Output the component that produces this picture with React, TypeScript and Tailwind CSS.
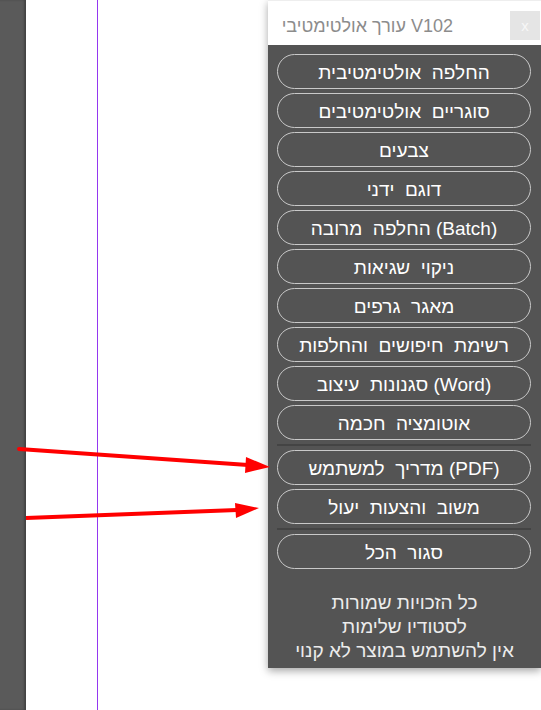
const TOP_ITEMS = [
  "החלפה  אולטימטיבית",
  "סוגריים  אולטימטיבים",
  "צבעים",
  "דוגם  ידני",
  "(Batch) החלפה  מרובה",
  "ניקוי  שגיאות",
  "מאגר  גרפים",
  "רשימת  חיפושים  והחלפות",
  "(Word) סגנונות  עיצוב",
  "אוטומציה  חכמה",
];

const HELP_ITEMS = ["(PDF) מדריך  למשתמש", "משוב  והצעות  יעול"];

function MenuButton({ label }: { label: string }) {
  return (
    <button
      dir="rtl"
      className="h-[35px] w-full shrink-0 rounded-full border-[1.5px] border-[#c9c9c9] bg-transparent pt-[2px] text-[19px] leading-none text-white whitespace-pre"
    >
      {label}
    </button>
  );
}

function Divider() {
  return <div className="h-[2px] w-full shrink-0 bg-[#444444]" />;
}

export default function App() {
  return (
    <div
      className="relative flex h-[710px] w-[541px] overflow-hidden bg-white"
      style={{ fontFamily: '"Liberation Sans", "DejaVu Sans", sans-serif' }}
    >
      {/* left gutter */}
      <div className="h-full w-[26px] shrink-0 bg-[#5a5a5a] shadow-[inset_-2px_0_2px_rgba(0,0,0,0.25)]" />

      {/* page area with guide line */}
      <div className="flex h-full flex-1">
        <div className="ml-[71px] h-full w-px bg-[#9437f0]" />
      </div>

      {/* editor panel */}
      <div className="flex h-[668px] w-[273px] shrink-0 flex-col bg-[#545454] shadow-[0_3px_8px_rgba(0,0,0,0.35)]">
        <div className="flex h-[45px] shrink-0 items-start justify-end border-t border-[#eeeeee] bg-white pt-[10px]">
          <span dir="rtl" className="mr-[57px] mt-[2px] whitespace-nowrap text-[18px] leading-[26px] text-[#8c8c8c]">
            V102 עורך אולטימטיבי
          </span>
          <button className="mr-px flex h-[29px] w-[30px] items-center justify-center bg-[#e5e5e5] text-[15px] leading-none text-[#f7f7f7]">
            x
          </button>
        </div>

        <div className="flex flex-col gap-[4px] pl-[9px] pr-[10px] pt-[9px]">
          {TOP_ITEMS.map((t) => (
            <MenuButton key={t} label={t} />
          ))}
          <Divider />
          {HELP_ITEMS.map((t) => (
            <MenuButton key={t} label={t} />
          ))}
          <Divider />
          <MenuButton label="סגור  הכל" />
        </div>

        <div dir="rtl" className="mt-[22px] text-center text-[19px] leading-[24px] text-[#ececec]">
          <p>כל הזכויות שמורות</p>
          <p>לסטודיו שלימות</p>
          <p>אין להשתמש במוצר לא קנוי</p>
        </div>
      </div>

      {/* annotation arrows */}
      <svg className="pointer-events-none absolute inset-0" width="541" height="710" viewBox="0 0 541 710">
        <line x1="19" y1="449" x2="248" y2="465" stroke="#ff0000" strokeWidth="4" strokeLinecap="round" />
        <polygon points="246,457 270,467 245,473" fill="#ff0000" />
        <line x1="26" y1="518" x2="237" y2="510" stroke="#ff0000" strokeWidth="4" />
        <polygon points="235,503 259,508 236,518" fill="#ff0000" />
      </svg>
    </div>
  );
}
